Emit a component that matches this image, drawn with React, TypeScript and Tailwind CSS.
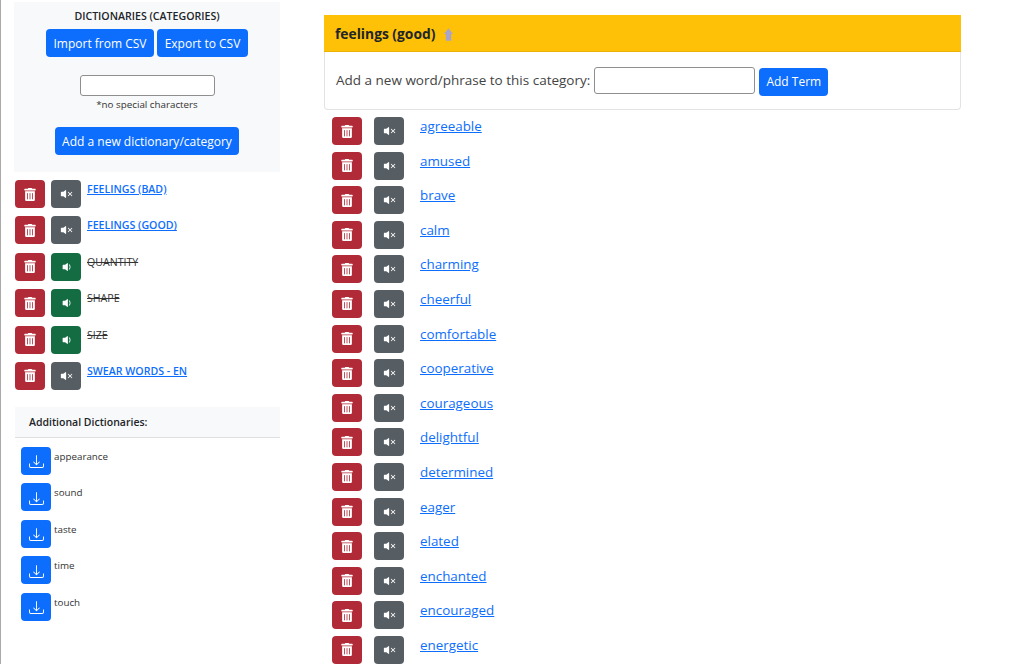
import { BsDownload, BsVolumeDownFill, BsVolumeMuteFill } from 'react-icons/bs';
import { FaTrashAlt } from 'react-icons/fa';

const dictionaries = [
  { name: 'FEELINGS (BAD)', active: true },
  { name: 'FEELINGS (GOOD)', active: true },
  { name: 'QUANTITY', active: false },
  { name: 'SHAPE', active: false },
  { name: 'SIZE', active: false },
  { name: 'SWEAR WORDS - EN', active: true },
];

const additional = ['appearance', 'sound', 'taste', 'time', 'touch'];

const terms = [
  'agreeable',
  'amused',
  'brave',
  'calm',
  'charming',
  'cheerful',
  'comfortable',
  'cooperative',
  'courageous',
  'delightful',
  'determined',
  'eager',
  'elated',
  'enchanted',
  'encouraged',
  'energetic',
];

function TrashButton() {
  return (
    <button className="flex h-7 w-[30px] shrink-0 items-center justify-center rounded bg-[#b02a37] text-white">
      <FaTrashAlt className="h-[13px] w-[12px]" />
    </button>
  );
}

function MuteButton({ on }: { on: boolean }) {
  return (
    <button
      className={`flex h-7 w-[30px] shrink-0 items-center justify-center rounded text-white ${
        on ? 'bg-[#565e64]' : 'bg-[#146c43]'
      }`}
    >
      {on ? (
        <BsVolumeMuteFill className="ml-px h-[14px] w-[14px]" />
      ) : (
        <BsVolumeDownFill className="ml-px h-[14px] w-[14px]" />
      )}
    </button>
  );
}

function BlueButton({ label, className }: { label: string; className?: string }) {
  return (
    <button className={`h-7 rounded bg-[#0d6efd] pt-px text-[12px] leading-none text-white ${className ?? ''}`}>
      {label}
    </button>
  );
}

export default function App() {
  return (
    <div className="flex h-[664px] overflow-hidden bg-white font-['Open_Sans','Noto_Sans',sans-serif] text-[#212529]">
      <aside className="h-full w-[280px] shrink-0 border-l-[1px] border-[#aaaaaa] pl-[13px]">
        <div className="mt-[2px] flex h-[170px] w-[266px] flex-col items-center bg-[#f8f9fa] pt-2">
          <h2 className="text-[10.6px] leading-[13px] font-semibold">DICTIONARIES (CATEGORIES)</h2>
          <div className="mt-[6px] flex gap-[3px]">
            <BlueButton label="Import from CSV" className="w-[108px]" />
            <BlueButton label="Export to CSV" className="w-[91px]" />
          </div>
          <input className="mt-[18px] h-[21px] w-[135px] rounded-[3px] border border-[#8f8f8f] bg-white" />
          <p className="mt-[2px] text-[9.8px] leading-[14px] text-[#333]">*no special characters</p>
          <BlueButton label="Add a new dictionary/category" className="mt-[15px] w-[184px]" />
        </div>

        <ul className="mt-2 ml-px">
          {dictionaries.map((d) => (
            <li key={d.name} className="mb-[8.4px] flex h-7 gap-[6px]">
              <TrashButton />
              <MuteButton on={d.active} />
              {d.active ? (
                <a href="#" className="text-[10.6px] leading-[19px] font-semibold text-[#0d6efd] underline">
                  {d.name}
                </a>
              ) : (
                <span className="text-[10.6px] leading-[19px] text-[#333] line-through">{d.name}</span>
              )}
            </li>
          ))}
        </ul>

        <div className="mt-[17px] ml-px flex h-[31px] w-[265px] items-center border-b border-[#dfe0e1] bg-[#f8f9fa] pl-[14px]">
          <h3 className="translate-y-px text-[10.5px] font-semibold">Additional Dictionaries:</h3>
        </div>

        <ul className="mt-[9px] ml-[7px]">
          {additional.map((name) => (
            <li key={name} className="mb-[8.4px] flex h-7 gap-[3px]">
              <button className="flex h-7 w-[30px] shrink-0 items-center justify-center rounded bg-[#0d6efd] text-white">
                <BsDownload className="h-[15px] w-[15px] translate-y-px" />
              </button>
              <span className="text-[9.8px] leading-[20px] text-[#333]">{name}</span>
            </li>
          ))}
        </ul>
      </aside>

      <main className="ml-[44px] w-[637px] shrink-0 pt-[15px]">
        <div className="rounded-[4px] border border-t-0 border-[#e3e3e3]">
          <div className="-mx-px flex h-[37px] items-center gap-[9px] border-b border-[#e9b308] bg-[#ffc107] pl-[11px]">
            <h1 className="translate-y-px text-[13.8px] font-bold">feelings (good)</h1>
            <svg viewBox="0 0 10 14" className="h-[13px] w-[9px] translate-y-px text-[#a9a4c9]" fill="currentColor">
              <path d="M5 0 L10 6.5 H8 V14 H2 V6.5 H0 Z" />
            </svg>
          </div>
          <div className="flex h-[57px] items-center pl-[11px]">
            <label className="text-[13.5px] text-[#444]">Add a new word/phrase to this category:</label>
            <input className="ml-[4px] h-[27px] w-[161px] rounded-[3px] border border-[#8f8f8f] bg-white" />
            <BlueButton label="Add Term" className="ml-[4px] w-[69px] translate-y-px" />
          </div>
        </div>

        <ul className="mt-[7px] ml-2">
          {terms.map((t) => (
            <li key={t} className="mb-[6.6px] flex h-7">
              <TrashButton />
              <div className="ml-3">
                <MuteButton on />
              </div>
              <a href="#" className="ml-4 text-[13.4px] leading-[19px] text-[#0d6efd] underline">
                {t}
              </a>
            </li>
          ))}
        </ul>
      </main>
    </div>
  );
}
